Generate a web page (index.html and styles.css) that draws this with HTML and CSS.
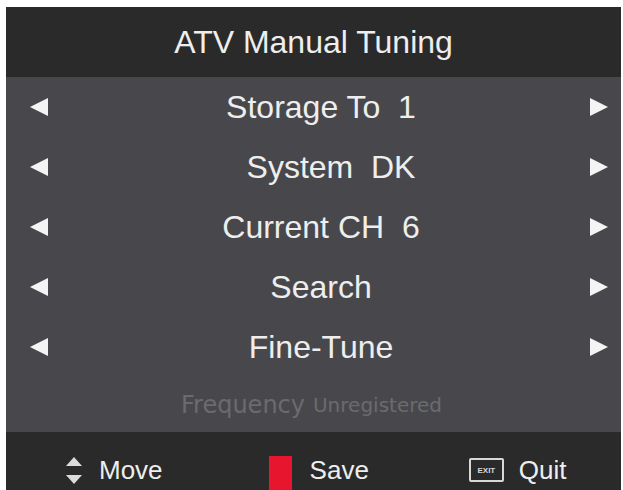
FILE: index.html
```html
<!DOCTYPE html>
<html lang="en">
<head>
    <meta charset="UTF-8">
    <meta name="viewport" content="width=device-width, initial-scale=1.0">
    <title>ATV Manual Tuning</title>
    <link rel="stylesheet" href="styles.css">
</head>
<body>
    <main class="menu">
        <header class="title">ATV Manual Tuning</header>

        <section class="options">
            <div class="row">
                <span class="arrow arrow--left"></span>
                <span class="label">Storage To&nbsp; 1</span>
                <span class="arrow arrow--right"></span>
            </div>
            <div class="row">
                <span class="arrow arrow--left"></span>
                <span class="label label--shift">System&nbsp; DK</span>
                <span class="arrow arrow--right"></span>
            </div>
            <div class="row">
                <span class="arrow arrow--left"></span>
                <span class="label">Current CH&nbsp; 6</span>
                <span class="arrow arrow--right"></span>
            </div>
            <div class="row">
                <span class="arrow arrow--left"></span>
                <span class="label">Search</span>
                <span class="arrow arrow--right"></span>
            </div>
            <div class="row">
                <span class="arrow arrow--left"></span>
                <span class="label">Fine-Tune</span>
                <span class="arrow arrow--right"></span>
            </div>
            <div class="freq">
                <span class="freq-name">Frequency</span>
                <span class="freq-value">Unregistered</span>
            </div>
        </section>

        <footer class="keys">
            <div class="key key--move">
                <span class="updown">
                    <span class="tri tri--up"></span>
                    <span class="tri tri--down"></span>
                </span>
                <span>Move</span>
            </div>
            <div class="key key--save">
                <span class="red"></span>
                <span>Save</span>
            </div>
            <div class="key key--quit">
                <span class="exit">EXIT</span>
                <span>Quit</span>
            </div>
        </footer>
    </main>
</body>
</html>
```

FILE: styles.css
```css
body{
    margin: 0;
    background: #ffffff;
    font-family: "Liberation Sans", Arial, sans-serif;
    overflow: hidden;
}

.menu{
    margin: 7px 2px 0 6px;
    display: flex;
    flex-direction: column;
    color: #eeeeee;
}

.title{
    background: #2a2a2a;
    height: 70px;
    display: flex;
    align-items: center;
    justify-content: center;
    font-size: 32px;
    padding-top: 1px;
    box-sizing: border-box;
}

.options{
    background: #48484c;
}

.row{
    height: 60px;
    display: flex;
    align-items: center;
    justify-content: space-between;
    padding: 0 13px 0 24px;
}

.label{
    font-size: 32px;
    flex: 1;
    text-align: center;
    padding-left: 4px;
}

.label--shift{
    padding-left: 24px;
}

.arrow{
    width: 0;
    height: 0;
    border-top: 9px solid transparent;
    border-bottom: 9px solid transparent;
}

.arrow--left{
    border-right: 18px solid #f4f4f4;
}

.arrow--right{
    border-left: 18px solid #f4f4f4;
}

.freq{
    height: 55px;
    display: flex;
    align-items: center;
    justify-content: center;
    gap: 8px;
    font-family: "DejaVu Sans", sans-serif;
    color: #6b6b6e;
    padding-right: 4px;
}

.freq-name{
    font-size: 24px;
}

.freq-value{
    font-size: 20px;
}

.keys{
    background: #2a2a2a;
    height: 80px;
    display: flex;
    align-items: flex-start;
    padding-top: 22px;
    box-sizing: border-box;
    font-size: 26px;
}

.key{
    display: flex;
    align-items: center;
    height: 32px;
}

.key--move{
    margin-left: 60px;
    gap: 17px;
}

.updown{
    display: flex;
    flex-direction: column;
    gap: 9px;
}

.tri{
    width: 0;
    height: 0;
    border-left: 8px solid transparent;
    border-right: 8px solid transparent;
}

.tri--up{
    border-bottom: 9px solid #dcdcdc;
}

.tri--down{
    border-top: 9px solid #dcdcdc;
}

.key--save{
    margin-left: 106px;
    gap: 18px;
}

.red{
    width: 23px;
    height: 35px;
    background: #e8152e;
    margin-top: 6px;
}

.key--quit{
    margin-left: 100px;
    gap: 15px;
}

.exit{
    border: 2px solid #d8d8d8;
    border-radius: 2px;
    width: 35px;
    height: 24px;
    font-size: 8px;
    font-weight: bold;
    display: flex;
    align-items: center;
    justify-content: center;
    color: #d8d8d8;
    box-sizing: border-box;
}
```
